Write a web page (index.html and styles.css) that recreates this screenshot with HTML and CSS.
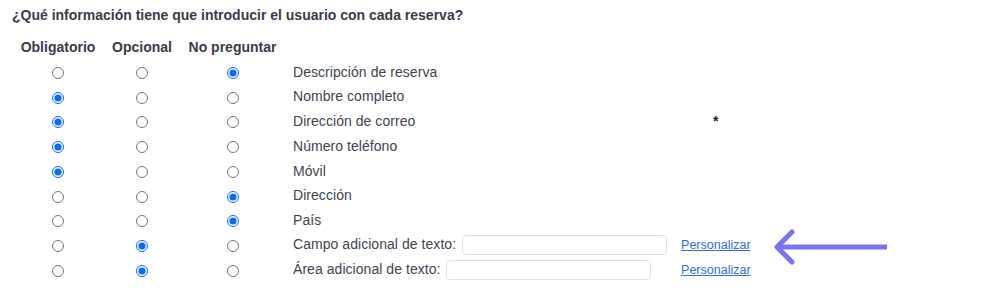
FILE: index.html
```
<!DOCTYPE html>
<html lang="es">
<head>
<meta charset="utf-8">
<link rel="stylesheet" href="styles.css">
</head>
<body>
<div class="panel">
  <h3 class="title">¿Qué información tiene que introducir el usuario con cada reserva?</h3>
  <table class="fields">
    <thead>
      <tr>
        <th class="col-req">Obligatorio</th>
        <th class="col-opt">Opcional</th>
        <th class="col-no">No preguntar</th>
        <th class="label-col"></th>
        <th class="extra"></th>
      </tr>
    </thead>
    <tbody>
      <tr>
        <td><input type="radio" name="r1"></td>
        <td><input type="radio" name="r1"></td>
        <td><input type="radio" name="r1" checked></td>
        <td class="label">Descripción de reserva</td>
        <td class="extra"></td>
      </tr>
      <tr>
        <td><input type="radio" name="r2" checked></td>
        <td><input type="radio" name="r2"></td>
        <td><input type="radio" name="r2"></td>
        <td class="label">Nombre completo</td>
        <td class="extra"></td>
      </tr>
      <tr>
        <td><input type="radio" name="r3" checked></td>
        <td><input type="radio" name="r3"></td>
        <td><input type="radio" name="r3"></td>
        <td class="label">Dirección de correo</td>
        <td class="extra"><span class="star">*</span></td>
      </tr>
      <tr>
        <td><input type="radio" name="r4" checked></td>
        <td><input type="radio" name="r4"></td>
        <td><input type="radio" name="r4"></td>
        <td class="label">Número teléfono</td>
        <td class="extra"></td>
      </tr>
      <tr>
        <td><input type="radio" name="r5" checked></td>
        <td><input type="radio" name="r5"></td>
        <td><input type="radio" name="r5"></td>
        <td class="label">Móvil</td>
        <td class="extra"></td>
      </tr>
      <tr>
        <td><input type="radio" name="r6"></td>
        <td><input type="radio" name="r6"></td>
        <td><input type="radio" name="r6" checked></td>
        <td class="label">Dirección</td>
        <td class="extra"></td>
      </tr>
      <tr>
        <td><input type="radio" name="r7"></td>
        <td><input type="radio" name="r7"></td>
        <td><input type="radio" name="r7" checked></td>
        <td class="label">País</td>
        <td class="extra"></td>
      </tr>
      <tr class="input-row">
        <td><input type="radio" name="r8"></td>
        <td><input type="radio" name="r8" checked></td>
        <td><input type="radio" name="r8"></td>
        <td class="label">Campo adicional de texto: <input type="text" class="text-field"></td>
        <td class="extra"><a href="#" class="link">Personalizar</a></td>
      </tr>
      <tr class="input-row">
        <td><input type="radio" name="r9"></td>
        <td><input type="radio" name="r9" checked></td>
        <td><input type="radio" name="r9"></td>
        <td class="label">Área adicional de texto: <input type="text" class="text-field"></td>
        <td class="extra"><a href="#" class="link">Personalizar</a></td>
      </tr>
    </tbody>
  </table>
  <svg class="arrow" width="122" height="40" viewBox="0 0 122 40" aria-hidden="true">
    <path d="M117 20 L7 20" stroke="#7873f0" stroke-width="5" fill="none"/>
    <path d="M22 5 L7 20 L22 35" stroke="#7873f0" stroke-width="5" fill="none" stroke-linejoin="round" stroke-linecap="round"/>
  </svg>
</div>
</body>
</html>
```
FILE: styles.css
```
html, body {
  margin: 0;
  padding: 0;
  background: #ffffff;
}

body {
  font-family: "Liberation Sans", Arial, Helvetica, sans-serif;
  color: #41444f;
}

.panel {
  position: relative;
  padding: 7px 12px 0 12px;
}

.title {
  margin: 0 0 11px 0;
  font-size: 14px;
  font-weight: bold;
  line-height: 17px;
  color: #383c4a;
}

.fields {
  border-collapse: separate;
  border-spacing: 0;
  font-size: 14px;
}

.fields th,
.fields td {
  padding: 4px 8px;
  line-height: 16.7px;
  text-align: center;
  vertical-align: middle;
}

.fields th {
  font-weight: bold;
  color: #383c4a;
  white-space: nowrap;
}

.fields th.col-req { width: 76px; }
.fields th.col-opt { width: 60px; }
.fields th.col-no { width: 89px; }

.fields td.label,
.fields th.label-col {
  text-align: left;
  width: 371px;
  padding-right: 6px;
  white-space: nowrap;
}

.fields td.label {
  letter-spacing: 0.05px;
}

.fields .extra {
  text-align: center;
  white-space: nowrap;
}

.fields input[type="radio"] {
  width: 12px;
  height: 12px;
  margin: 0;
  vertical-align: middle;
  accent-color: #0a6cf5;
}

.input-row td {
  padding-top: 2px;
  padding-bottom: 3px;
}

.text-field {
  box-sizing: border-box;
  width: 205px;
  height: 20px;
  margin: 0 0 0 2px;
  padding: 2px 6px;
  border: 1px solid #e2e2e6;
  border-radius: 4px;
  vertical-align: middle;
  font-size: 13px;
}

.link {
  font-size: 12.5px;
  color: #2f6ee6;
  text-decoration: underline;
}

.star {
  font-size: 14px;
  font-weight: bold;
  color: #222222;
}

.arrow {
  position: absolute;
  left: 770px;
  top: 227px;
}
```
